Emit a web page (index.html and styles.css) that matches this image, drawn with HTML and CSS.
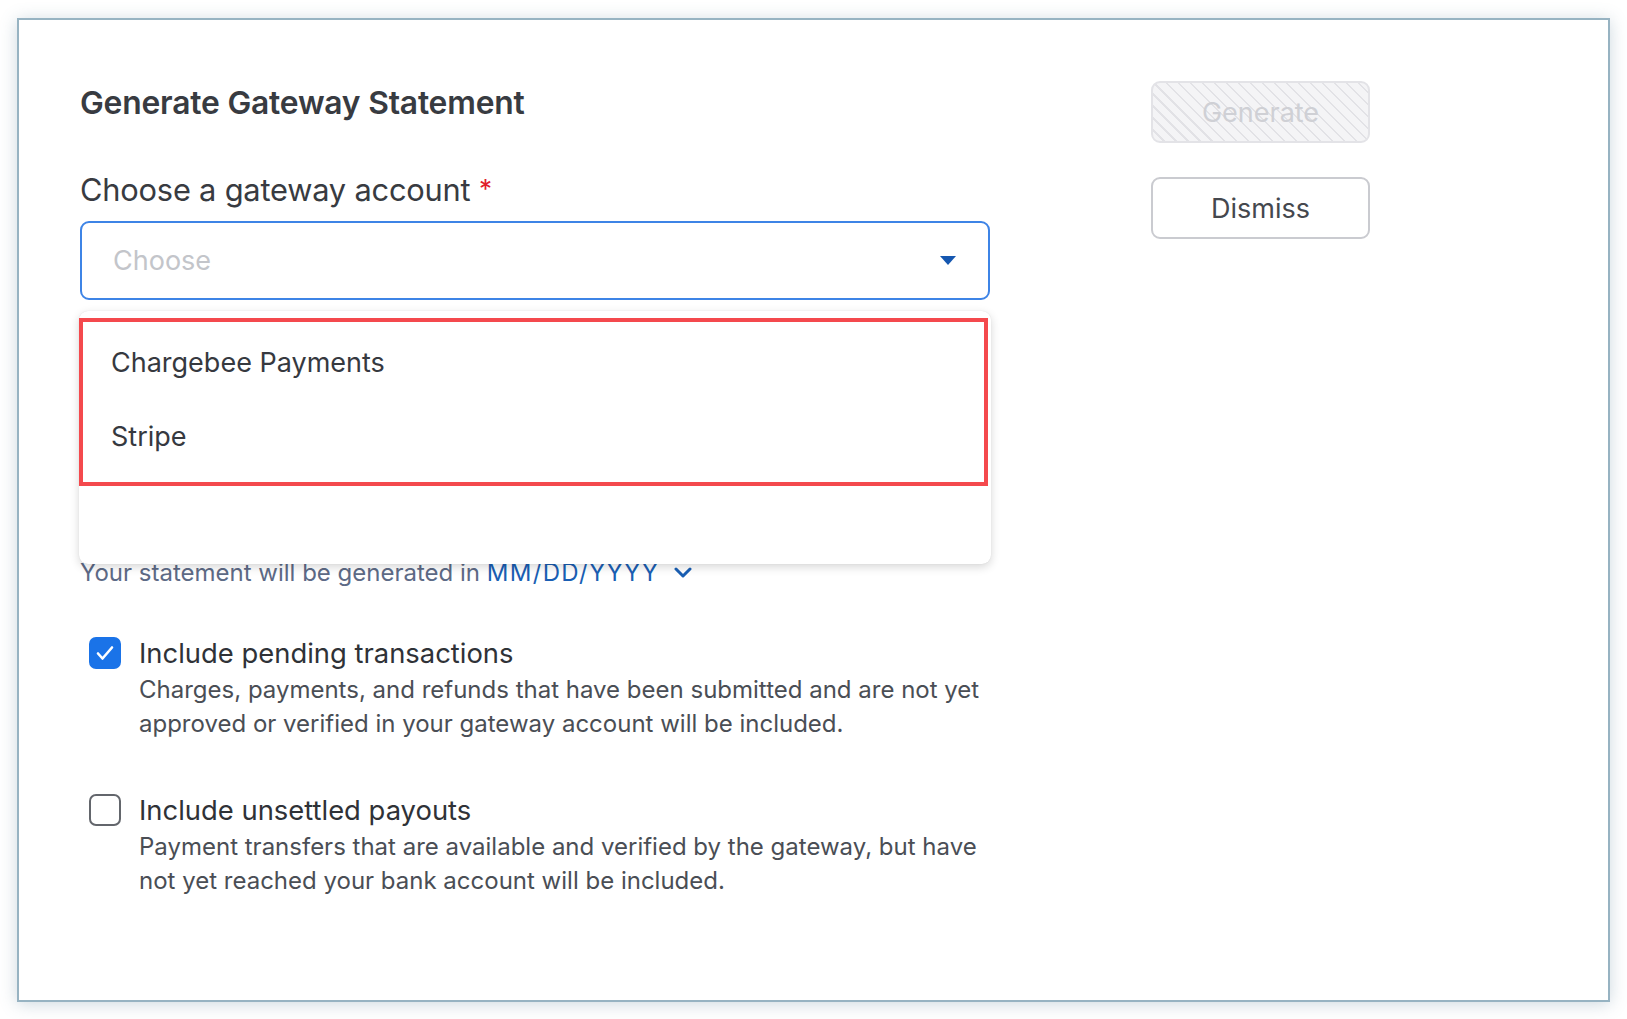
FILE: index.html
```html
<!DOCTYPE html>
<html lang="en">
<head>
<meta charset="utf-8">
<title>Generate Gateway Statement</title>
<link rel="stylesheet" href="styles.css">
</head>
<body>
  <div class="frame">
    <main class="form">
      <h1 class="title">Generate Gateway Statement</h1>

      <label class="label">Choose a gateway account <span class="req">*</span></label>
      <div class="select-wrap">
        <div class="select">
          <span class="placeholder">Choose</span>
          <svg class="caret" width="16" height="9" viewBox="0 0 16 9"><path d="M0 0h16L8 9z" fill="#1557b0"/></svg>
        </div>
        <div class="menu">
          <ul class="options">
            <li class="option">Chargebee Payments</li>
            <li class="option">Stripe</li>
          </ul>
        </div>
      </div>

      <p class="schedule">Your statement will be generated in <span class="date">MM/DD/YYYY</span>
        <svg class="chev" width="18" height="12" viewBox="0 0 18 12"><path d="M2 2l7 7 7-7" fill="none" stroke="#1a5fb4" stroke-width="3" stroke-linecap="round" stroke-linejoin="round"/></svg>
      </p>

      <div class="check-row">
        <span class="box checked">
          <svg width="20" height="16" viewBox="0 0 20 16"><path d="M3 8.5l4.5 5L17 2.5" fill="none" stroke="#fff" stroke-width="2.6" stroke-linecap="round" stroke-linejoin="round"/></svg>
        </span>
        <div class="check-text">
          <div class="check-title">Include pending transactions</div>
          <div class="check-desc">Charges, payments, and refunds that have been submitted and are not yet approved or verified in your gateway account will be included.</div>
        </div>
      </div>

      <div class="check-row second">
        <span class="box"></span>
        <div class="check-text">
          <div class="check-title">Include unsettled payouts</div>
          <div class="check-desc">Payment transfers that are available and verified by the gateway, but have not yet reached your bank account will be included.</div>
        </div>
      </div>
    </main>

    <aside class="actions">
      <button class="btn btn-disabled" disabled>Generate</button>
      <button class="btn btn-outline">Dismiss</button>
    </aside>
  </div>
</body>
</html>
```
FILE: styles.css
```css
* { box-sizing: border-box; }

html, body {
  margin: 0;
  padding: 0;
  background: #ffffff;
}

body {
  font-family: Inter, "Noto Sans", "Liberation Sans", sans-serif;
  color: #3a3d43;
  padding: 18px 17px 17px 17px;
}

.frame {
  width: 1593px;
  height: 984px;
  border: 2px solid #97b3c2;
  background: #fff;
  box-shadow: 0 2px 16px rgba(90, 125, 150, 0.3);
  display: flex;
  padding: 65px 0 0 61px;
}

.form {
  width: 912px;
  display: flex;
  flex-direction: column;
}

.title {
  margin: 0;
  font-size: 31.8px;
  line-height: 36px;
  font-weight: 600;
  color: #383b41;
  letter-spacing: -0.2px;
}

.label {
  margin-top: 50px;
  font-size: 30.8px;
  line-height: 36px;
  font-weight: 400;
  color: #383b41;
  letter-spacing: -0.2px;
}

.req {
  color: #e0202a;
  font-size: 26px;
  margin-left: 0;
  vertical-align: 3px;
}

.select-wrap {
  position: relative;
  margin-top: 13px;
}

.select {
  width: 910px;
  height: 79px;
  border: 2px solid #3e84e6;
  border-radius: 9px;
  display: flex;
  align-items: center;
  justify-content: space-between;
  padding: 0 32px 0 31px;
}

.placeholder {
  font-size: 27px;
  color: #c3c5ca;
}

.caret { display: block; }

.menu {
  position: absolute;
  top: calc(100% + 11px);
  left: -1px;
  width: 912px;
  height: 253px;
  background: #fff;
  border-radius: 9px;
  box-shadow: 0 3px 10px rgba(0, 0, 0, 0.16), 0 0 1px rgba(0, 0, 0, 0.12);
  padding-top: 7px;
  z-index: 2;
}

.options {
  list-style: none;
  margin: 0;
  width: 909px;
  border: 4px solid #f4494d;
  padding: 4px 0 8px 0;
}

.option {
  height: 74px;
  line-height: 74px;
  padding-left: 28px;
  font-size: 27px;
  color: #36393f;
}

.schedule {
  margin: 258px 0 0 0;
  font-size: 24px;
  line-height: 30px;
  color: #5d6a86;
  display: flex;
  align-items: center;
  white-space: pre;
}

.date {
  color: #1a5fb4;
  letter-spacing: 1.3px;
}

.chev { margin-left: 15px; }

.check-row {
  display: flex;
  align-items: flex-start;
  margin-top: 48px;
  padding-left: 9px;
}

.check-row.second { margin-top: 52px; }

.box {
  flex: none;
  width: 32px;
  height: 32px;
  border: 2px solid #63666c;
  border-radius: 7px;
  margin-top: 1px;
  display: flex;
  align-items: center;
  justify-content: center;
}

.box.checked {
  background: #1a73e8;
  border-color: #1a73e8;
}

.check-text {
  margin-left: 18px;
}

.check-title {
  font-size: 27.4px;
  line-height: 34px;
  color: #2f3237;
}

.check-desc {
  margin-top: 3px;
  font-size: 24px;
  line-height: 34px;
  color: #4a4e55;
  width: 860px;
}

.actions {
  margin-left: 159px;
  margin-top: -4px;
  display: flex;
  flex-direction: column;
  gap: 34px;
}

.btn {
  width: 219px;
  height: 62px;
  border-radius: 9px;
  font-family: inherit;
  font-size: 27px;
  padding: 0;
}

.btn-disabled {
  border: 2px solid #e3e3e7;
  color: #cfd0d5;
  background: repeating-linear-gradient(45deg, #f4f4f6 0 7px, #e2e2e6 7px 8.5px);
}

.btn-outline {
  border: 2px solid #cacbd0;
  background: #fff;
  color: #45484e;
}
```
